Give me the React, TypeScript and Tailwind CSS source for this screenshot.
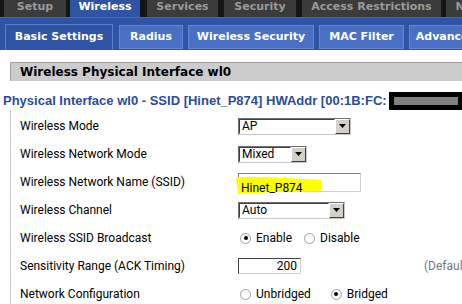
import React from 'react';

const verdana = { fontFamily: '"DejaVu Sans", Verdana, sans-serif' };
const tahoma = { fontFamily: 'Roboto, Tahoma, sans-serif' };

interface TopTab {
  label: string;
  cls: string;
  active?: boolean;
}

const topTabs: TopTab[] = [
  { label: 'Setup', cls: 'ml-[4px] w-[62px]' },
  { label: 'Wireless', cls: 'ml-[4px] w-[70px]', active: true },
  { label: 'Services', cls: 'ml-[7px] w-[71px]' },
  { label: 'Security', cls: 'ml-[6px] w-[72px]' },
  { label: 'Access Restrictions', cls: 'ml-[6px] w-[139px]' },
  { label: 'NAT / QoS', cls: 'ml-[5px] w-[80px]' },
];

const subTabs = [
  { label: 'Basic Settings', cls: 'w-[108px]', active: true },
  { label: 'Radius', cls: 'ml-[6px] w-[64px]' },
  { label: 'Wireless Security', cls: 'ml-[5px] w-[126px]' },
  { label: 'MAC Filter', cls: 'ml-[5px] w-[85px]' },
  { label: 'Advanced Settings', cls: 'ml-[5px] w-[130px]' },
];

const Select: React.FC<{ value: string; width: string }> = ({ value, width }) => (
  <div className={`${width} h-[17px] flex bg-white border border-t-[#707070] border-l-[#707070] border-r-[#c8c8c8] border-b-[#c8c8c8]`}>
    <div className="flex-1 border border-t-[#404040] border-l-[#404040] border-r-transparent border-b-transparent pl-[2px] text-[12px] leading-[13px] text-black" style={tahoma}>
      {value}
    </div>
    <div className="w-[15px] bg-[#d4d0c8] border border-t-white border-l-white border-r-[#404040] border-b-[#404040] flex items-center justify-center">
      <svg width="7" height="4" viewBox="0 0 7 4"><path d="M0 0h7L3.5 4z" fill="#000" /></svg>
    </div>
  </div>
);

const Radio: React.FC<{ checked?: boolean; label: string }> = ({ checked, label }) => (
  <div className="flex items-center">
    <span className="w-[11px] h-[11px] rounded-full border border-[#a0a0a0] bg-white flex items-center justify-center">
      {checked && <span className="w-[4px] h-[4px] rounded-full bg-black" />}
    </span>
    <span className="ml-[5px] text-[12px] text-black" style={tahoma}>{label}</span>
  </div>
);

const Row: React.FC<{ label: string; children: React.ReactNode }> = ({ label, children }) => (
  <div className="h-[28px] flex items-center whitespace-nowrap">
    <div className="w-[218px] shrink-0 text-[12px] text-black" style={tahoma}>{label}</div>
    <div className="flex-1 flex items-center">{children}</div>
  </div>
);

export default function App() {
  return (
    <div className="w-[462px] h-[304px] overflow-hidden bg-white">
      {/* main tabs */}
      <div className="flex h-[17px] bg-[#151515] whitespace-nowrap">
        {topTabs.map((t) => (
          <div
            key={t.label}
            className={`${t.cls} shrink-0 text-center text-[11px] font-bold leading-[13px] ${t.active ? 'bg-[#2f54a3] text-white' : 'bg-[#3b3b3b] text-[#9a9a9a]'}`}
            style={verdana}
          >
            {t.label}
          </div>
        ))}
      </div>

      {/* sub tabs */}
      <div className="h-[33px] bg-[#2f54a3] border-t border-[#4467b8] flex items-end pl-[5px] whitespace-nowrap">
        {subTabs.map((t) => (
          <div
            key={t.label}
            className={`${t.cls} shrink-0 flex items-center justify-center text-[11px] font-bold text-white ${
              t.active
                ? 'h-[26px] bg-[#2f54a3] border border-b-0 border-[#5a7ed0]'
                : 'h-[24px] mb-[1px] bg-[#4a70c6] border border-[#6186d6]'
            }`}
            style={verdana}
          >
            {t.label}
          </div>
        ))}
      </div>

      {/* section header */}
      <div className="mt-[12px] ml-[10px] h-[19px] bg-[#cccccc] border-t border-l border-[#a0a0a0] flex items-center pl-[9px]">
        <span className="text-[12px] font-bold text-black" style={verdana}>Wireless Physical Interface wl0</span>
      </div>

      {/* interface line */}
      <div className="mt-[10px] ml-[3px] h-[19px] flex items-center whitespace-nowrap">
        <span className="text-[13px] font-bold text-[#2a4c9c]" style={{ fontFamily: '"Liberation Sans", Tahoma, sans-serif' }}>
          Physical Interface wl0 - SSID [Hinet_P874] HWAddr [00:1B:FC:
        </span>
        <div className="ml-auto w-[73px] h-[18px] bg-black flex items-center pl-[5px] shrink-0">
          <div className="w-[64px] h-[8px] bg-[#808080]" />
        </div>
      </div>

      {/* fieldset */}
      <div className="ml-[10px] border-l border-[#c8c8c8] pl-[9px] pt-[2px]">
        <Row label="Wireless Mode">
          <Select value="AP" width="w-[113px]" />
        </Row>
        <Row label="Wireless Network Mode">
          <Select value="Mixed" width="w-[69px]" />
        </Row>
        <Row label="Wireless Network Name (SSID)">
          <div className="relative w-[123px] h-[19px] border border-t-[#808080] border-l-[#808080] border-r-[#d4d0c8] border-b-[#d4d0c8] bg-white">
            <svg className="absolute left-[-3px] top-[2px]" width="87" height="19" viewBox="0 0 87 19">
              <path d="M0 1 L30 1 L86 4 L85 15 L40 16 L2 18 Z" fill="#ffff00" />
            </svg>
            <span className="relative pl-[2px] text-[12px] leading-[17px] text-black" style={tahoma}>Hinet_P874</span>
          </div>
        </Row>
        <Row label="Wireless Channel">
          <Select value="Auto" width="w-[107px]" />
        </Row>
        <Row label="Wireless SSID Broadcast">
          <div className="ml-[2px] flex items-center">
            <Radio checked label="Enable" />
            <div className="ml-[12px]"><Radio label="Disable" /></div>
          </div>
        </Row>
        <Row label="Sensitivity Range (ACK Timing)">
          <div className="w-[63px] h-[16px] shrink-0 border border-t-[#404040] border-l-[#404040] border-r-[#d4d0c8] border-b-[#d4d0c8] bg-white text-right pr-[3px] text-[12px] leading-[14px] text-black" style={tahoma}>
            200
          </div>
          <span className="ml-[123px] text-[12px] text-[#777]" style={tahoma}>(Default: 2000 meters)</span>
        </Row>
        <Row label="Network Configuration">
          <div className="ml-[2px] flex items-center">
            <Radio label="Unbridged" />
            <div className="ml-[20px]"><Radio checked label="Bridged" /></div>
          </div>
        </Row>
      </div>
    </div>
  );
}
